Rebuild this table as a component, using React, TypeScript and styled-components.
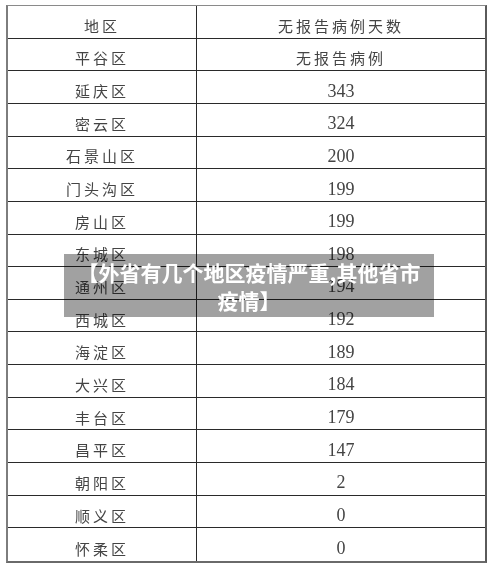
import React, { FC } from 'react'
import styled, { createGlobalStyle } from 'styled-components'

type Row = {
    area: string
    days: string
}

const rows: Row[] = [
    { area: '地区', days: '无报告病例天数' },
    { area: '平谷区', days: '无报告病例' },
    { area: '延庆区', days: '343' },
    { area: '密云区', days: '324' },
    { area: '石景山区', days: '200' },
    { area: '门头沟区', days: '199' },
    { area: '房山区', days: '199' },
    { area: '东城区', days: '198' },
    { area: '通州区', days: '194' },
    { area: '西城区', days: '192' },
    { area: '海淀区', days: '189' },
    { area: '大兴区', days: '184' },
    { area: '丰台区', days: '179' },
    { area: '昌平区', days: '147' },
    { area: '朝阳区', days: '2' },
    { area: '顺义区', days: '0' },
    { area: '怀柔区', days: '0' }
]

const GlobalStyle = createGlobalStyle`
    html, body {
        margin: 0;
        padding: 0;
        background: #fff;
        -webkit-font-smoothing: antialiased;
    }
`

const Page = styled.div`
    position: relative;
    width: 500px;
    height: 572px;
    padding: 5px 0 0 6px;
    box-sizing: border-box;
    background: #fff;
`

const Table = styled.div`
    display: grid;
    grid-template-rows: repeat(17, 1fr);
    width: 481px;
    height: 558px;
    box-sizing: border-box;
    border-top: 1px solid #8a8a8a;
    border-left: 2px solid #7d7d7d;
    border-right: 2px solid #5a5a5a;
    border-bottom: 2px solid #6a6a6a;
    will-change: transform;
`

const TableRow = styled.div<{ $last?: boolean }>`
    display: grid;
    grid-template-columns: 188px 1fr;
    border-bottom: ${p => (p.$last ? 'none' : '1px solid #2a2a2a')};
`

const Cell = styled.div<{ $num?: boolean }>`
    display: flex;
    align-items: center;
    justify-content: center;
    padding-top: 7px;
    font-family: ${p => (p.$num ? '"Liberation Serif", serif' : '"Noto Sans CJK SC", sans-serif')};
    font-size: ${p => (p.$num ? '18px' : '15px')};
    letter-spacing: ${p => (p.$num ? '0' : '3px')};
    font-weight: 400;
    color: #444;
    line-height: 1;

    & + & {
        border-left: 1px solid #2a2a2a;
    }
`

const Banner = styled.div`
    position: absolute;
    left: 64px;
    top: 254px;
    width: 370px;
    padding: 4px 6px 3px;
    box-sizing: border-box;
    background: rgba(0, 0, 0, 0.37);
    color: #fff;
    font-family: "Noto Sans CJK SC", sans-serif;
    font-weight: 700;
    font-size: 21px;
    line-height: 28px;
    text-align: center;
`

const isNumber = (s: string) => /^\d+$/.test(s)

const App: FC = () => {
    return (
        <Page>
            <GlobalStyle />
            <Table>
                { rows.map((r, i) => (
                    <TableRow key={ r.area } $last={ i === rows.length - 1 }>
                        <Cell>{ r.area }</Cell>
                        <Cell $num={ isNumber(r.days) }>{ r.days }</Cell>
                    </TableRow>
                )) }
            </Table>
            <Banner>【外省有几个地区疫情严重,其他省市疫情】</Banner>
        </Page>
    )
}

export default App
